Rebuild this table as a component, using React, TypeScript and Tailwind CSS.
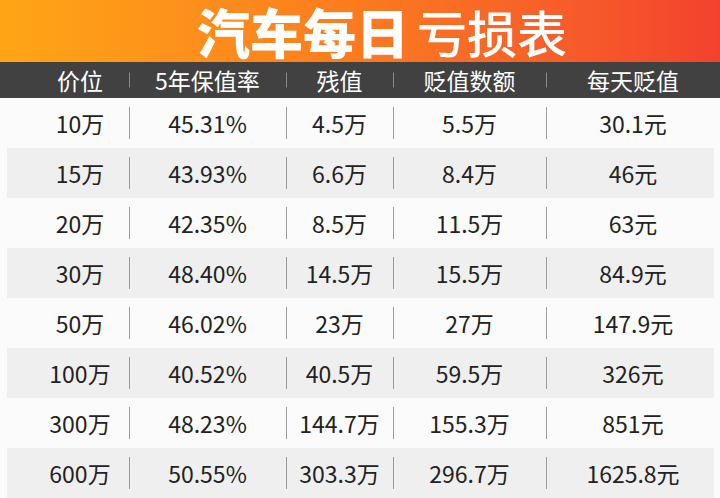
import React from "react";

const rows = [
  ["10万", "45.31%", "4.5万", "5.5万", "30.1元"],
  ["15万", "43.93%", "6.6万", "8.4万", "46元"],
  ["20万", "42.35%", "8.5万", "11.5万", "63元"],
  ["30万", "48.40%", "14.5万", "15.5万", "84.9元"],
  ["50万", "46.02%", "23万", "27万", "147.9元"],
  ["100万", "40.52%", "40.5万", "59.5万", "326元"],
  ["300万", "48.23%", "144.7万", "155.3万", "851元"],
  ["600万", "50.55%", "303.3万", "296.7万", "1625.8元"],
];

const heads = ["价位", "5年保值率", "残值", "贬值数额", "每天贬值"];

const font = { fontFamily: '"Noto Sans CJK SC", "Noto Sans", sans-serif' };

export default function App() {
  return (
    <div className="w-[720px] h-[498px] overflow-hidden bg-[#fbfbfb]" style={font}>
      <div className="h-[62px] flex items-center justify-center pl-[44px] bg-gradient-to-r from-[#ffa615] via-[#fb7a1e] to-[#f3412e] text-white leading-[62px]">
        <span className="text-[53px] font-black">汽车每日</span>
        <span className="text-[50px] font-medium ml-[8px]">亏损表</span>
      </div>
      <div className="h-[36px] bg-[#414141] grid grid-cols-[129px_157px_107px_153px_1fr] items-center text-white text-[23px] leading-[36px]">
        {heads.map((h, i) => (
          <div key={h} className={`relative text-center ${i === 0 ? "pl-[31px]" : ""}`}>
            {i > 0 && <span className="absolute left-0 top-1/2 -translate-y-1/2 h-[15px] w-px bg-[#8a8a8a]" />}
            {h}
          </div>
        ))}
      </div>
      <div>
        {rows.map((r, ri) => (
          <div
            key={r[0]}
            className={`h-[50px] grid grid-cols-[129px_157px_107px_153px_1fr] items-center text-[23px] text-[#222] ${ri % 2 === 1 ? "bg-[linear-gradient(to_right,transparent_7px,#efefef_7px,#efefef_714px,transparent_714px)]" : ""}`}
          >
            {r.map((c, i) => (
              <div key={i} className={`relative h-full flex items-center justify-center ${i === 0 ? "pl-[31px]" : ""}`}>
                {i > 0 && <span className="absolute left-0 top-[9px] bottom-[9px] w-px bg-[#9c9c9c]" />}
                {c}
              </div>
            ))}
          </div>
        ))}
      </div>
    </div>
  );
}
